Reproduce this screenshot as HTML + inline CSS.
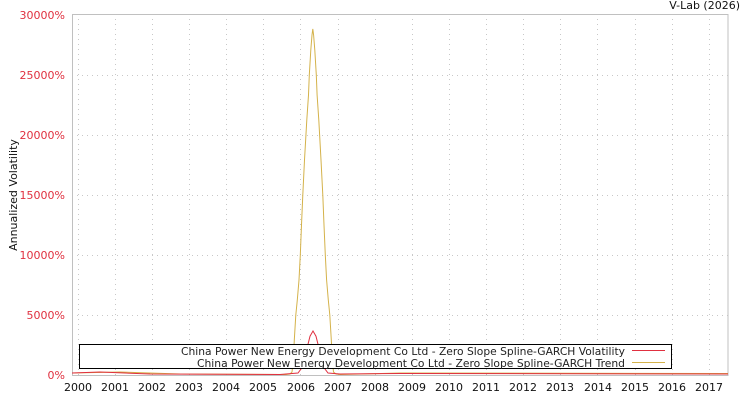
<!DOCTYPE html>
<html><head><meta charset="utf-8"><style>
body{margin:0;background:#fff;}
svg{display:block;font-family:"DejaVu Sans","Liberation Sans",sans-serif;}
</style></head><body>
<svg width="750" height="400" viewBox="0 0 750 400" xmlns="http://www.w3.org/2000/svg">
<rect x="0" y="0" width="750" height="400" fill="#fff"/>
<g stroke="#c8c8c8" stroke-width="1" stroke-dasharray="1,4">
<line x1="72" y1="315.5" x2="728" y2="315.5"/>
<line x1="72" y1="255.5" x2="728" y2="255.5"/>
<line x1="72" y1="195.5" x2="728" y2="195.5"/>
<line x1="72" y1="135.5" x2="728" y2="135.5"/>
<line x1="72" y1="75.5" x2="728" y2="75.5"/>
<line x1="78.5" y1="14" x2="78.5" y2="375"/>
<line x1="115.5" y1="14" x2="115.5" y2="375"/>
<line x1="152.5" y1="14" x2="152.5" y2="375"/>
<line x1="189.5" y1="14" x2="189.5" y2="375"/>
<line x1="226.5" y1="14" x2="226.5" y2="375"/>
<line x1="263.5" y1="14" x2="263.5" y2="375"/>
<line x1="300.5" y1="14" x2="300.5" y2="375"/>
<line x1="338.5" y1="14" x2="338.5" y2="375"/>
<line x1="375.5" y1="14" x2="375.5" y2="375"/>
<line x1="412.5" y1="14" x2="412.5" y2="375"/>
<line x1="449.5" y1="14" x2="449.5" y2="375"/>
<line x1="486.5" y1="14" x2="486.5" y2="375"/>
<line x1="523.5" y1="14" x2="523.5" y2="375"/>
<line x1="560.5" y1="14" x2="560.5" y2="375"/>
<line x1="597.5" y1="14" x2="597.5" y2="375"/>
<line x1="635.5" y1="14" x2="635.5" y2="375"/>
<line x1="672.5" y1="14" x2="672.5" y2="375"/>
<line x1="709.5" y1="14" x2="709.5" y2="375"/>
</g>
<rect x="72.5" y="14.5" width="655.5" height="361" fill="none" stroke="#c0c0c0"/>
<path d="M72 373 L120 372 L180 374 L286 374.5 L290 374 L292 372 L293.3 360 L294.3 340 L295.8 315 L297.3 300 L299 280 L300.3 255 L301.5 225 L302.8 195 L304.5 160 L306.8 120 L308.5 95 L309.3 75 L310.8 50 L312 35 L312.8 29 L313.6 35 L314.8 50 L316.3 75 L317.1 95 L318.8 120 L321 160 L322.8 195 L324 225 L325.3 255 L326.6 280 L328.3 300 L329.8 315 L331.3 340 L332.3 360 L333.5 372 L336 374 L340 374.5 L400 373 L728 373.5" fill="none" stroke="#d4b24a" stroke-width="1"/>
<path d="M72 373 L100 372 L150 374 L280 374.5 L298 373 L301 369 L304 360.7 L307 348.3 L310 336.2 L313 331 L316 336.2 L319 348.3 L322 360.7 L325 369 L328 373 L340 374 L400 373.5 L728 374" fill="none" stroke="#e03040" stroke-width="1"/>
<rect x="79.5" y="344.5" width="592" height="24" fill="#fff" stroke="#000"/>
<g font-size="11" fill="#222" text-anchor="end">
<text x="625" y="355" textLength="444" lengthAdjust="spacingAndGlyphs">China Power New Energy Development Co Ltd - Zero Slope Spline-GARCH Volatility</text>
<text x="625" y="367" textLength="428" lengthAdjust="spacingAndGlyphs">China Power New Energy Development Co Ltd - Zero Slope Spline-GARCH Trend</text>
</g>
<line x1="632" y1="350.5" x2="665" y2="350.5" stroke="#e03040"/>
<line x1="632" y1="362.5" x2="665" y2="362.5" stroke="#d4b24a"/>
<g font-size="11" fill="#e0303f" text-anchor="end">
<text x="65" y="379">0%</text>
<text x="65" y="319">5000%</text>
<text x="65" y="259">10000%</text>
<text x="65" y="199">15000%</text>
<text x="65" y="139">20000%</text>
<text x="65" y="79">25000%</text>
<text x="65" y="19">30000%</text>
</g>
<g font-size="11" fill="#111" text-anchor="middle">
<text x="78" y="391">2000</text><text x="115" y="391">2001</text><text x="152" y="391">2002</text>
<text x="189" y="391">2003</text><text x="226" y="391">2004</text><text x="263" y="391">2005</text>
<text x="301" y="391">2006</text><text x="338" y="391">2007</text><text x="375" y="391">2008</text>
<text x="412" y="391">2009</text><text x="449" y="391">2010</text><text x="486" y="391">2011</text>
<text x="523" y="391">2012</text><text x="560" y="391">2013</text><text x="598" y="391">2014</text>
<text x="635" y="391">2015</text><text x="672" y="391">2016</text><text x="709" y="391">2017</text>
</g>
<text x="17" y="195" font-size="11" fill="#111" text-anchor="middle" transform="rotate(-90 17 195)">Annualized Volatility</text>
<text x="740" y="9" font-size="11" fill="#111" text-anchor="end">V-Lab (2026)</text>
</svg>
</body></html>
